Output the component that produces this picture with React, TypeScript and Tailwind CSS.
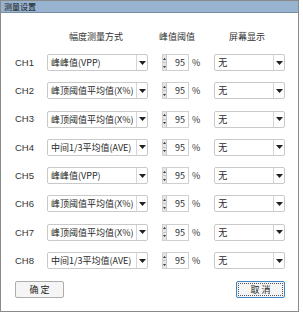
import React from "react";

const rows = [
  { ch: "CH1", mode: "峰峰值(VPP)" },
  { ch: "CH2", mode: "峰顶阈值平均值(X%)" },
  { ch: "CH3", mode: "峰顶阈值平均值(X%)" },
  { ch: "CH4", mode: "中间1/3平均值(AVE)" },
  { ch: "CH5", mode: "峰峰值(VPP)" },
  { ch: "CH6", mode: "峰顶阈值平均值(X%)" },
  { ch: "CH7", mode: "峰顶阈值平均值(X%)" },
  { ch: "CH8", mode: "中间1/3平均值(AVE)" },
];

function Arrow() {
  return (
    <svg width="7" height="4" viewBox="0 0 7 4">
      <path d="M0 0 L7 0 L3.5 4 Z" fill="#222" />
    </svg>
  );
}

function Combo({ text, w }: { text: string; w: string }) {
  return (
    <div className={`${w} h-[17px] flex items-stretch border border-[#c9c9c9] rounded-[2px] bg-white`}>
      <div className="flex-1 flex items-center pl-[3px] text-[9px] leading-none text-[#2a2a2a] whitespace-nowrap overflow-hidden">
        {text}
      </div>
      <div className="w-[11px] flex items-center justify-center border-l border-[#d6d6d6]">
        <Arrow />
      </div>
    </div>
  );
}

function Spinner() {
  return (
    <div className="flex items-center">
      <div className="w-[27px] h-[17px] flex border border-[#d0d0d0] bg-white">
        <div className="w-[4px] flex flex-col bg-[#e6e6e6] border-r border-[#c8c8c8]">
          <div className="flex-1 flex items-center justify-center border-b border-[#c8c8c8]">
            <svg width="3" height="2" viewBox="0 0 3 2">
              <path d="M0 2 L3 2 L1.5 0 Z" fill="#333" />
            </svg>
          </div>
          <div className="flex-1 flex items-center justify-center">
            <svg width="3" height="2" viewBox="0 0 3 2">
              <path d="M0 0 L3 0 L1.5 2 Z" fill="#333" />
            </svg>
          </div>
        </div>
        <div className="flex-1 flex items-center justify-end pr-[3px] text-[9px] leading-none text-[#2a2a2a]">
          95
        </div>
      </div>
      <span className="ml-[3px] text-[9px] leading-none text-[#333]">%</span>
    </div>
  );
}

export default function App() {
  return (
    <div
      className="w-[303px] h-[316px] bg-white"
      style={{ fontFamily: '"Noto Sans CJK SC", "Liberation Sans", sans-serif' }}
    >
      <div className="w-[299px] h-[312px] border border-[#8a8a8a] flex flex-col">
        <div className="h-[12px] bg-[#99b4d1] border-b border-[#7a8ea3] flex items-center pl-[3px] text-[8px] leading-none text-[#111]">
          测量设置
        </div>
        <div className="flex text-[9px] leading-none text-[#333] mt-[17px] h-[12px] items-center">
          <div className="w-[68px]" />
          <div className="w-[56px]">幅度测量方式</div>
          <div className="w-[34px]" />
          <div className="w-[40px]">峰值阈值</div>
          <div className="w-[30px]" />
          <div>屏幕显示</div>
        </div>
        <div className="flex flex-col mt-[12px]">
          {rows.map((r) => (
            <div key={r.ch} className="h-[28.3px] flex items-start">
              <div className="w-[46px] pl-[14px] h-[17px] flex items-center text-[9.5px] leading-none text-[#333]" style={{ fontFamily: '"Liberation Sans", sans-serif' }}>
                {r.ch}
              </div>
              <Combo text={r.mode} w="w-[101px]" />
              <div className="w-[14px]" />
              <Spinner />
              <div className="w-[14px]" />
              <Combo text="无" w="w-[71px]" />
            </div>
          ))}
        </div>
        <div className="flex justify-between mt-[1px] pl-[14px] pr-[13px]">
          <button className="w-[49px] h-[17px] border border-[#adadad] rounded-[2px] bg-[#f5f5f5] text-[9px] leading-none text-[#222] flex items-center justify-center">
            确 定
          </button>
          <button className="w-[49px] h-[17px] border border-[#3c86c8] rounded-[2px] bg-[#f5f5f5] p-[1px] flex">
            <span className="flex-1 border border-dotted border-[#555] flex items-center justify-center text-[9px] leading-none text-[#222]">
              取 消
            </span>
          </button>
        </div>
      </div>
    </div>
  );
}
